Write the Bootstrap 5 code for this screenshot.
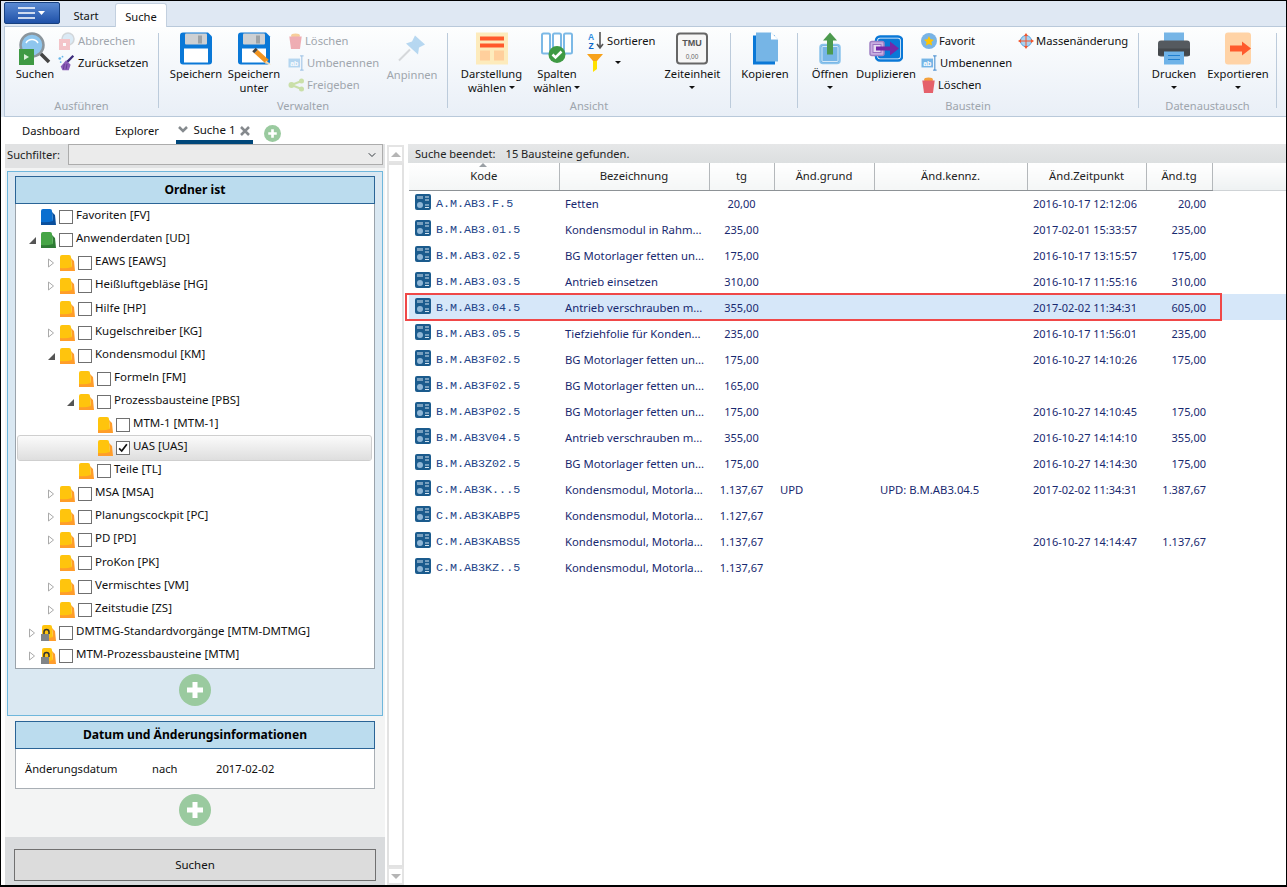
<!DOCTYPE html>
<html lang="de">
<head>
  <meta charset="UTF-8" />
  <title>Suche</title>
  <meta name="viewport" content="width=device-width, initial-scale=1" />
  <link href="https://cdn.jsdelivr.net/npm/bootstrap@5.3.3/dist/css/bootstrap.min.css" rel="stylesheet" />
  <style>
    html, body { margin: 0; height: 887px; overflow: hidden; background: #fff; }
    body { font-family: "Noto Sans", "Liberation Sans", sans-serif; font-size: 11.5px; color: #111; line-height: 1.2; }
    svg { display: block; flex: none; }
    .app-frame { height: 887px; border: 1px solid #000; border-bottom-width: 2px; display: flex; flex-direction: column; overflow: hidden; }

    /* ribbon */
    .top-area { background: #dfe8f3; padding-left: 3px; flex: none; font-size: 11.2px; }
    .tab-strip { height: 25px; align-items: flex-end; }
    .menu-btn { width: 56px; height: 22px; margin-bottom: 2px; border: 1px solid #17407f; border-radius: 2px; background: linear-gradient(#5a8ad2, #1f51a8); }
    .rb-tab { height: 23px; padding: 6px 0 0; width: 52px; text-align: center; }
    .rb-tab-on { background: #fff; border: 1px solid #c3d0df; border-bottom: 0; border-radius: 3px 3px 0 0; margin-left: 3px; margin-bottom: -1px; height: 24px; position: relative; }
    .ribbon { height: 91px; border: 1px solid #b9c9da; border-right: 0; background: linear-gradient(#fdfefe, #e9eff7); }
    .rb-group { display: flex; flex-direction: column; flex: none; }
    .rb-body { display: flex; height: 71px; }
    .rb-title { text-align: center; color: #9ea5ad; height: 16px; line-height: 16px; font-size: 11.1px; }
    .rb-sep { width: 1px; height: 75px; margin-top: 6px; background: #bccbdb; flex: none; }
    .rb-big { display: flex; flex-direction: column; align-items: center; padding-top: 5px; text-align: center; line-height: 13.5px; flex: none; }
    .rb-big svg { margin-bottom: 2px; height: 33px; }
    .rb-small { padding-top: 3px; flex: none; }
    .rb-item { display: flex; align-items: center; height: 22px; white-space: nowrap; gap: 2px; }
    .is-off { color: #a0a6ad; }
    .is-off svg { opacity: .5; }
    .only-caret::after { margin-left: 0; }
    .dropdown-toggle::after { color: #111; }
    .w-g1 { width: 153px; } .w-g2 { width: 288px; } .w-g3 { width: 282px; } .w-g4 { width: 66px; } .w-g5 { width: 340px; } .w-g6 { width: 137px; }
    .pl-g1 { padding-left: 7px; } .pl-g2 { padding-left: 8px; } .pl-g3 { padding-left: 8px; } .pl-g4 { padding-left: 2px; } .pl-g5 { padding-left: 9px; } .pl-g6 { padding-left: 6px; }
    .bw-44 { width: 46px; } .bw-58 { width: 58px; } .bw-70 { width: 71px; } .bw-60 { width: 60px; } .bw-66 { width: 66px; }
    .gap-save { margin-left: 5px; } .gap-pin { margin-left: 7px; } .gap-zeit { margin-left: 4px; } .gap-fav { margin-left: 2px; } .gap-mass { margin-left: 6px; } .gap-exp { margin-left: 2px; }
    .filter-caret { margin-left: 10px; }
    .bw-pin { width: 52px; }
    .bw-pin svg { margin-bottom: 3px; }

    /* doc tabs */
    .doc-tabs { height: 27px; flex: none; padding-left: 21px; font-size: 11.2px; }
    .doc-tab { padding-top: 7px; }
    .doc-tab-2 { margin-left: 35px; }
    .doc-tab-on { margin-left: 17px; width: 77px; height: 27px; border-bottom: 4px solid #00477a; padding-top: 6px; display: flex; align-items: flex-start; justify-content: center; gap: 5px; font-size: 11.5px; }
    .doc-tab-on svg { margin-top: 3px; }
    .add-tab { margin: 8px 0 0 11px; }

    /* left column */
    .main-area { flex: 1; min-height: 0; display: flex; padding-left: 4px; }
    .left-col { width: 380px; flex: none; background: #d9dbdd; display: flex; flex-direction: column; }
    .filter-bar { height: 24px; flex: none; background: #e1e2e3; display: flex; align-items: center; padding: 0 2px; gap: 8px; color: #222; font-size: 11.2px; }
    .filter-select.form-select { height: 21px; min-height: 0; font-size: 11px; padding: 0 20px 0 4px; border: 1px solid #acacac; border-radius: 0; background-color: #ebebeb; background-size: 10px 8px; background-position: right 5px center; margin-bottom: 3px; flex: 1; }
    .filter-label { margin-bottom: 2px; }
    .left-scroll { background: #f3f4f4; height: 669px; flex: none; padding: 3px 2px 0 2px; }
    .blue-box { height: 545px; background: #dae8f2; border: 1px solid #6fb7dc; padding: 4px 7px 0; }
    .sec-head { height: 28px; background: #bbdcee; border: 1px solid #2a6496; text-align: center; font-weight: 700; line-height: 25px; font-size: 12.1px; color: #000; }
    .tree-box { height: 465px; background: #fff; border: 1px solid #9aa3ab; border-top: 0; padding-top: 1.5px; overflow: hidden; }
    .tree-row { height: 23.1px; display: flex; align-items: center; white-space: nowrap; position: relative; }
    .tree-row > span:last-child { margin-bottom: 4px; }
    .lv0 { padding-left: 11px; } .lv1 { padding-left: 30px; } .lv2 { padding-left: 49px; } .lv3 { padding-left: 68px; }
    .tree-arrow { width: 14px; display: flex; justify-content: flex-start; flex: none; }
    .tree-sel { background: linear-gradient(#fbfbfb, #dedede); outline: 1px solid #cfcfcf; border-radius: 2px; margin: 0 3px 0 2px; width: auto; }
    .tree-sel.lv3 { padding-left: 66px; }
    .tree-check.form-check-input { width: 14px; height: 14px; margin: 0 3px 0 3px; border: 1px solid #707070; border-radius: 0; flex: none; background-color: #fff; }
    .tree-check.form-check-input:checked { background-color: #fff; border-color: #707070; background-image: url("data:image/svg+xml,%3Csvg xmlns='http://www.w3.org/2000/svg' viewBox='0 0 14 14'%3E%3Cpath d='M2.5 7.5l3 3 6-8' fill='none' stroke='%23111' stroke-width='2'/%3E%3C/svg%3E"); background-size: 100%; }
    .add-row { display: flex; justify-content: center; padding-top: 5px; }
    .date-box { padding: 5px 8px 0 8px; }
    .date-body { height: 40px; background: #fff; border: 1px solid #a9afb5; border-top: 0; display: flex; align-items: center; padding-left: 9px; font-size: 11.2px; }
    .dt-a { width: 127px; } .dt-b { width: 64px; }
    .left-foot { flex: 1; padding: 12px 8px 0 9px; }
    .search-btn.btn { width: 362px; height: 32px; background: #dcdcdc; border: 1px solid #707070; border-radius: 0; font-size: 11.5px; color: #111; padding: 0; }

    /* scrollbar */
    .v-scroll { width: 17px; flex: none; margin: 1px 4px 0 2px; display: flex; flex-direction: column; background: #fff; }
    .sb-btn { height: 18px; border: 2px solid #e4e4e4; display: flex; align-items: center; justify-content: center; flex: none; }
    .sb-track { flex: 1; border: 2px solid #e2e2e2; }
    .sb-up { width: 0; height: 0; border: 5px solid transparent; border-top: 0; border-bottom-color: #b5b5b5; }
    .sb-down { width: 0; height: 0; border: 5px solid transparent; border-bottom: 0; border-top-color: #b5b5b5; }

    /* result grid */
    .right-col { flex: 1; min-width: 0; display: flex; flex-direction: column; }
    .status-bar { height: 19px; flex: none; background: linear-gradient(#e6e7e8, #dcdfe0); display: flex; align-items: center; padding-left: 7px; gap: 10px; color: #222; font-size: 11.1px; }
    .grid-wrap { position: relative; flex: 1; padding-left: 1px; }
    .result-grid.table { table-layout: fixed; width: 100%; margin: 0; font-size: 11.3px; }
    .result-grid th, .result-grid td { padding: 0; border: 0; background: transparent; white-space: nowrap; overflow: hidden; vertical-align: middle; box-shadow: none; }
    .result-grid th { height: 27px; font-weight: 400; text-align: center; color: #222; background: linear-gradient(#fff, #f4f6f6); border-right: 1px solid #b4b8bb; border-bottom: 1px solid #8d9296; position: relative; }
    .result-grid th.th-rest { border-right: 0; border-bottom-color: #cfd3d6; background: linear-gradient(#fff, #eef1f2); }
    .result-grid td { height: 26px; color: #18296f; padding-top: 1px; }
    .result-grid .row-sel td { background: #d6e7f9; }
    .sort-mark { position: absolute; top: 0; left: 50%; margin-left: -5px; width: 0; height: 0; border: 4px solid transparent; border-top: 0; border-bottom: 4px solid #9aa0a5; }
    .c-kode { width: 150px; } .c-bez { width: 150px; } .c-tg { width: 65px; } .c-grund { width: 100px; } .c-kenn { width: 153px; } .c-zeit { width: 119px; } .c-atg { width: 66px; }
    .cell-kode { display: flex; align-items: center; gap: 5px; padding-left: 6px; font-family: "Liberation Mono", monospace; font-size: 11.7px; color: #234488; }
    .cell-kode svg { margin-top: -3px; }
    .cell-kode span { margin-top: 1px; }
    .result-grid td.td-bez { padding-left: 6px; }
    .result-grid td.td-tg { text-align: center; font-size: 11px; }
    .result-grid td.td-left { padding-left: 6px; }
    .result-grid td.td-num { font-size: 11px; }
    .result-grid td.td-atg { text-align: right; padding-right: 6px; font-size: 11px; }
    .red-mark { position: absolute; left: -3px; top: 130px; width: 817px; height: 28px; border: 2px solid #f04848; }

    /* folder colours */
    .fd-y { --fd-main: #ffc40d; --fd-dark: #ff9d2a; }
    .fd-b { --fd-main: #0a6fd0; --fd-dark: #0a4f9c; }
    .fd-g { --fd-main: #46a546; --fd-dark: #2e7a34; }
  </style>
</head>
<body>
  <svg width="0" height="0" class="position-absolute">
    <defs>
      <symbol id="i-search" viewBox="0 0 32 33"><path d="M21 21l9 9" stroke="#444" stroke-width="3.5"/><circle cx="13" cy="13" r="11.5" fill="#8ec6ee" stroke="#8b959c" stroke-width="2.5"/><path d="M7 11a7 7 0 0 1 12 0" fill="none" stroke="#fff" stroke-width="1.5"/><rect x="0" y="17" width="15" height="16" fill="#3f9a44"/><path d="M5 22l5 3-5 3z" fill="#d9f0d9"/></symbol>
      <symbol id="i-stop" viewBox="0 0 18 18"><circle cx="10" cy="7" r="6" fill="#bcd9ef" stroke="#aab2b8" stroke-width="1.5"/><rect x="1" y="7" width="11" height="11" fill="#ef8f97"/><rect x="5" y="11" width="3" height="3" fill="#fff"/></symbol>
      <symbol id="i-broom" viewBox="0 0 20 18"><path d="M17 1l-7 7" stroke="#3b2a7a" stroke-width="2.5"/><path d="M9 6l5 5-2 6H5l-2-4z" fill="#8b5cb8"/><path d="M7 10l-1 6M10 10l-1 6" stroke="#5f3a8e" stroke-width="1"/><circle cx="2" cy="4" r="1.5" fill="#66b5e8"/><circle cx="5" cy="2" r="1" fill="#66b5e8"/><circle cx="3" cy="8" r="1" fill="#66b5e8"/></symbol>
      <symbol id="i-save" viewBox="0 0 32 32"><path d="M3 0h25l4 4v25a3 3 0 0 1-3 3H3a3 3 0 0 1-3-3V3a3 3 0 0 1 3-3z" fill="#0a78d7"/><rect x="5" y="1" width="22" height="11" rx="1" fill="#cdd0d3"/><rect x="18" y="3" width="4" height="8" fill="#9da2a6"/><rect x="4" y="16" width="24" height="14" fill="#fff"/></symbol>
      <symbol id="i-save-as" viewBox="0 0 33 32"><path d="M3 0h25l4 4v25a3 3 0 0 1-3 3H3a3 3 0 0 1-3-3V3a3 3 0 0 1 3-3z" fill="#0a78d7"/><rect x="5" y="1" width="22" height="11" rx="1" fill="#cdd0d3"/><rect x="18" y="3" width="4" height="8" fill="#9da2a6"/><rect x="4" y="16" width="24" height="14" fill="#fff"/><path d="M18 19l11 10" stroke="#f2941f" stroke-width="5"/><path d="M16 17l2 2" stroke="#444" stroke-width="5"/><path d="M28 28l5 4-6-1z" fill="#f6d7a8"/></symbol>
      <symbol id="i-trash" viewBox="0 0 16 18"><ellipse cx="8" cy="3" rx="5" ry="2.5" fill="#f4a13c"/><path d="M1 4h14l-2 14H3z" fill="#e5616b"/></symbol>
      <symbol id="i-rename" viewBox="0 0 18 18"><rect x="0" y="4" width="13" height="10" fill="#76b5e6"/><text x="6.5" y="12" font-family="Liberation Sans, sans-serif" font-size="8" font-weight="700" fill="#fff" text-anchor="middle">ab</text><path d="M15 1v16M13 1h4M13 17h4" stroke="#2a7bc8" stroke-width="1" fill="none"/></symbol>
      <symbol id="i-share" viewBox="0 0 16 14"><path d="M3 7l10-4M3 7l10 4" stroke="#a5cc5a" stroke-width="2"/><circle cx="3" cy="7" r="3" fill="#a5cc5a"/><circle cx="13" cy="3" r="2.5" fill="#a5cc5a"/><circle cx="13" cy="11" r="2.5" fill="#a5cc5a"/></symbol>
      <symbol id="i-pin" viewBox="0 0 28 28"><path d="M17 1l10 9-6 3-1 7L8 9l6-2z" fill="#76b5e6"/><path d="M12 15L1 26" stroke="#b5b8bb" stroke-width="2"/></symbol>
      <symbol id="i-layout" viewBox="0 0 32 32"><rect width="32" height="32" fill="#fdebbc"/><rect x="4" y="4" width="24" height="4" fill="#ff5a2c"/><rect x="4" y="11" width="24" height="4" fill="#ff5a2c"/><rect x="4" y="18" width="10" height="10" fill="#ffcf9c"/><rect x="18" y="18" width="10" height="10" fill="#ffcf9c"/></symbol>
      <symbol id="i-columns" viewBox="0 0 32 32"><rect x="1" y="1" width="8" height="20" rx="1.5" fill="#fff" stroke="#7cb9e6" stroke-width="2"/><rect x="12" y="1" width="8" height="20" rx="1.5" fill="#fff" stroke="#7cb9e6" stroke-width="2"/><rect x="23" y="1" width="8" height="20" rx="1.5" fill="#fff" stroke="#7cb9e6" stroke-width="2"/><circle cx="16" cy="22" r="8.5" fill="#3f9a44"/><path d="M11.5 22l3 3 6-6" fill="none" stroke="#fff" stroke-width="2.5"/></symbol>
      <symbol id="i-sort" viewBox="0 0 18 18"><text x="4" y="8" font-family="Liberation Sans, sans-serif" font-size="8.5" font-weight="700" fill="#2f8ee0" text-anchor="middle">A</text><text x="4" y="17" font-family="Liberation Sans, sans-serif" font-size="8.5" font-weight="700" fill="#0a66c8" text-anchor="middle">Z</text><path d="M13 0v15M10 12l3 4 3-4" fill="none" stroke="#555" stroke-width="1.6"/></symbol>
      <symbol id="i-funnel" viewBox="0 0 16 18"><path d="M0 0h16l-6 7H6z" fill="#f7a21b"/><path d="M6 7h4v8l-4 3z" fill="#ffe000"/></symbol>
      <symbol id="i-tmu" viewBox="0 0 32 32"><rect x="1" y="1" width="30" height="30" rx="3" fill="#f6f6f6" stroke="#666" stroke-width="2"/><text x="16" y="13" font-family="Liberation Sans, sans-serif" font-size="9" font-weight="700" fill="#555" text-anchor="middle">TMU</text><text x="16" y="26" font-family="Liberation Sans, sans-serif" font-size="6.5" fill="#666" text-anchor="middle">0,00</text></symbol>
      <symbol id="i-copy" viewBox="0 0 25 32"><rect x="0" y="3" width="22" height="29" fill="#0a78d7"/><path d="M3 0h15l7 7v22H3z" fill="#76b5e6"/><path d="M18 0l7 7h-7z" fill="#fff"/></symbol>
      <symbol id="i-open" viewBox="0 0 22 32"><rect x="1" y="12" width="20" height="19" rx="3" fill="#76b5e6" stroke="#8cc4ec" stroke-width="1.5"/><rect x="3" y="14" width="16" height="15" rx="1" fill="#76b5e6" stroke="#fff" stroke-width=".7"/><path d="M11 0l7 8h-4v14H8V8H4z" fill="#4c9a4e"/></symbol>
      <symbol id="i-dup" viewBox="0 0 34 26"><rect x="7" y="1" width="26" height="24" rx="4" fill="#fff" stroke="#0a78d7" stroke-width="2.5"/><rect x="9" y="3" width="22" height="20" rx="2" fill="#0a78d7"/><rect x="1" y="6" width="14" height="14" rx="2" fill="#c9aee0" stroke="#a080c4" stroke-width="1.5"/><rect x="4" y="9" width="8" height="8" fill="#e6dcf0" stroke="#9a72c0"/><path d="M7 11h14V6l9 7-9 7v-5H7z" fill="#7428a8"/></symbol>
      <symbol id="i-fav" viewBox="0 0 16 16"><circle cx="8" cy="8" r="8" fill="#78b4e6"/><path d="M8 3l1.5 3.3 3.5.4-2.6 2.4.7 3.5L8 10.900 4.900 12.600l.7-3.500L3 6.700l3.500-.4z" fill="#ffc400"/></symbol>
      <symbol id="i-mass" viewBox="0 0 16 16"><circle cx="8" cy="8" r="5.500" fill="#a9d2f0" stroke="#5aa5e0"/><path d="M8 0l2 3H6zM8 16l2-3H6zM0 8l3-2v4zM16 8l-3-2v4z" fill="#f2552c"/><path d="M8 2v12M2 8h12" stroke="#f2552c" stroke-width="1"/></symbol>
      <symbol id="i-print" viewBox="0 0 32 32"><rect x="6" y="0" width="20" height="10" fill="#76b5e6"/><rect x="0" y="8" width="32" height="16" rx="3" fill="#555a5f"/><rect x="0" y="16" width="32" height="7" fill="#44484c"/><rect x="6" y="19" width="20" height="13" fill="#6fb3e8"/><path d="M10 23h12M10 27h12" stroke="#1f7fd0"/></symbol>
      <symbol id="i-export" viewBox="0 0 26 32"><rect width="26" height="32" rx="3" fill="#ffd3a6"/><path d="M5 13h12V9l9 7-9 7v-4H5z" fill="#ff5a2c"/></symbol>
      <symbol id="i-folder" viewBox="0 0 15 16"><path d="M0 12h12l-1-9 3 3 1 10H0z" style="fill:var(--fd-dark)"/><path d="M0 2q0-2 2-2h7q2 0 2 2l1 10q-6 2-12 1z" style="fill:var(--fd-main)"/></symbol>
      <symbol id="i-folder-lock" viewBox="0 0 15 16"><path d="M0 12h12l-1-9 3 3 1 10H0z" fill="#ff9d2a"/><path d="M1 2q0-2 2-2h6q2 0 2 2l1 10q-6 2-11 1z" fill="#ffc40d"/><path d="M3 9V7a2.500 2.500 0 0 1 5 0v2" fill="none" stroke="#333" stroke-width="1.500"/><rect x="0" y="9" width="8" height="7" fill="#808487"/></symbol>
      <symbol id="i-row" viewBox="0 0 16 16"><rect width="16" height="16" rx="2" fill="#1b5b8d"/><circle cx="5" cy="11" r="3" fill="#8fb6d6"/><path d="M3 2v3M5 2v3M10 3h4M10 6h4M10 11h4M10 13.500h4M7 2v3" stroke="#d5e4f0" stroke-width="1"/></symbol>
      <symbol id="i-plus" viewBox="0 0 32 32"><circle cx="16" cy="16" r="16" fill="#9aca9f"/><path d="M16 8v16M8 16h16" stroke="#fff" stroke-width="5"/></symbol>
      <symbol id="t-open" viewBox="0 0 10 10"><path d="M9 2v7H2z" fill="#555"/></symbol>
      <symbol id="t-closed" viewBox="0 0 10 10"><path d="M2.500 1l5 4-5 4z" fill="#fff" stroke="#aaa"/></symbol>
      <symbol id="i-chev" viewBox="0 0 10 8"><path d="M1 1l4 4 4-4" fill="none" stroke="#858a8e" stroke-width="2.500"/></symbol>
      <symbol id="i-x" viewBox="0 0 10 10"><path d="M1 1l8 8M9 1l-8 8" stroke="#85898d" stroke-width="2.500"/></symbol>
    </defs>
  </svg>

  <div class="app-frame">
    <!-- Ribbon -->
    <div class="top-area">
      <div class="d-flex tab-strip">
        <div class="menu-btn d-flex align-items-center justify-content-center gap-1">
          <svg width="30" height="14" viewBox="0 0 30 14"><path d="M1 2h17M1 7h17M1 12h17" stroke="#fff" stroke-width="1.600"/><path d="M21 5h7l-3.500 4z" fill="#fff"/></svg>
        </div>
        <div class="rb-tab">Start</div>
        <div class="rb-tab rb-tab-on">Suche</div>
      </div>
      <div class="ribbon d-flex">
        <div class="rb-group w-g1">
          <div class="rb-body pl-g1">
            <div class="rb-big bw-44"><svg width="32" height="33"><use href="#i-search"/></svg>Suchen</div>
            <div class="rb-small">
              <div class="rb-item is-off"><svg width="18" height="18"><use href="#i-stop"/></svg>Abbrechen</div>
              <div class="rb-item"><svg width="18" height="18"><use href="#i-broom"/></svg>Zurücksetzen</div>
            </div>
          </div>
          <div class="rb-title">Ausführen</div>
        </div>
        <div class="rb-sep"></div>
        <div class="rb-group w-g2">
          <div class="rb-body pl-g2">
            <div class="rb-big bw-58"><svg width="32" height="33"><use href="#i-save"/></svg>Speichern</div>
            <div class="rb-big bw-58"><svg width="33" height="33"><use href="#i-save-as"/></svg>Speichern<br />unter</div>
            <div class="rb-small gap-save">
              <div class="rb-item is-off"><svg width="15" height="16"><use href="#i-trash"/></svg>Löschen</div>
              <div class="rb-item is-off"><svg width="17" height="16"><use href="#i-rename"/></svg>Umbenennen</div>
              <div class="rb-item is-off"><svg width="17" height="14"><use href="#i-share"/></svg>Freigeben</div>
            </div>
            <div class="rb-big bw-pin gap-pin is-off"><svg width="28" height="33"><use href="#i-pin"/></svg>Anpinnen</div>
          </div>
          <div class="rb-title">Verwalten</div>
        </div>
        <div class="rb-sep"></div>
        <div class="rb-group w-g3">
          <div class="rb-body pl-g3">
            <div class="rb-big bw-70"><svg width="32" height="33"><use href="#i-layout"/></svg>Darstellung<span class="dropdown-toggle">wählen</span></div>
            <div class="rb-big bw-60"><svg width="32" height="33"><use href="#i-columns"/></svg>Spalten<span class="dropdown-toggle">wählen</span></div>
            <div class="rb-small">
              <div class="rb-item"><svg width="18" height="18"><use href="#i-sort"/></svg>Sortieren</div>
              <div class="rb-item"><svg width="16" height="18"><use href="#i-funnel"/></svg><span class="dropdown-toggle only-caret filter-caret"></span></div>
            </div>
            <div class="rb-big bw-66 gap-zeit"><svg width="32" height="33"><use href="#i-tmu"/></svg>Zeiteinheit<span class="dropdown-toggle only-caret"></span></div>
          </div>
          <div class="rb-title">Ansicht</div>
        </div>
        <div class="rb-sep"></div>
        <div class="rb-group w-g4">
          <div class="rb-body pl-g4">
            <div class="rb-big w-100"><svg width="25" height="33"><use href="#i-copy"/></svg>Kopieren</div>
          </div>
          <div class="rb-title">&nbsp;</div>
        </div>
        <div class="rb-sep"></div>
        <div class="rb-group w-g5">
          <div class="rb-body pl-g5">
            <div class="rb-big bw-44"><svg width="22" height="33"><use href="#i-open"/></svg>Öffnen<span class="dropdown-toggle only-caret"></span></div>
            <div class="rb-big bw-66"><svg width="34" height="33"><use href="#i-dup"/></svg>Duplizieren</div>
            <div class="rb-small gap-fav">
              <div class="rb-item"><svg width="16" height="16"><use href="#i-fav"/></svg>Favorit</div>
              <div class="rb-item"><svg width="17" height="16"><use href="#i-rename"/></svg>Umbenennen</div>
              <div class="rb-item"><svg width="15" height="16"><use href="#i-trash"/></svg>Löschen</div>
            </div>
            <div class="rb-small gap-mass">
              <div class="rb-item"><svg width="16" height="16"><use href="#i-mass"/></svg>Massenänderung</div>
            </div>
          </div>
          <div class="rb-title">Baustein</div>
        </div>
        <div class="rb-sep"></div>
        <div class="rb-group w-g6">
          <div class="rb-body pl-g6">
            <div class="rb-big bw-58"><svg width="32" height="33"><use href="#i-print"/></svg>Drucken<span class="dropdown-toggle only-caret"></span></div>
            <div class="rb-big bw-66 gap-exp"><svg width="26" height="33"><use href="#i-export"/></svg>Exportieren<span class="dropdown-toggle only-caret"></span></div>
          </div>
          <div class="rb-title">Datenaustausch</div>
        </div>
        <div class="rb-sep"></div>
      </div>
    </div>

    <!-- Dokument-Tabs -->
    <div class="doc-tabs d-flex">
      <div class="doc-tab">Dashboard</div>
      <div class="doc-tab doc-tab-2">Explorer</div>
      <div class="doc-tab-on"><svg width="10" height="8"><use href="#i-chev"/></svg>Suche 1<svg width="10" height="10"><use href="#i-x"/></svg></div>
      <svg class="add-tab" width="17" height="17"><use href="#i-plus"/></svg>
    </div>

    <div class="main-area">
      <!-- Suchfilter und Kriterien -->
      <div class="left-col">
        <div class="filter-bar">
          <span class="filter-label">Suchfilter:</span>
          <select class="form-select filter-select"><option></option></select>
        </div>
        <div class="left-scroll">
          <div class="blue-box">
            <div class="sec-head">Ordner ist</div>
            <div class="tree-box" id="tree"></div>
            <div class="add-row"><svg width="32" height="32"><use href="#i-plus"/></svg></div>
          </div>
          <div class="date-box">
            <div class="sec-head">Datum und Änderungsinformationen</div>
            <div class="date-body">
              <span class="dt-a">Änderungsdatum</span><span class="dt-b">nach</span><span>2017-02-02</span>
            </div>
            <div class="add-row"><svg width="32" height="32"><use href="#i-plus"/></svg></div>
          </div>
        </div>
        <div class="left-foot">
          <button type="button" class="btn search-btn">Suchen</button>
        </div>
      </div>

      <div class="v-scroll">
        <div class="sb-btn"><span class="sb-up"></span></div>
        <div class="sb-track"></div>
        <div class="sb-btn"><span class="sb-down"></span></div>
      </div>

      <!-- Ergebnisliste -->
      <div class="right-col">
        <div class="status-bar"><span>Suche beendet:</span><span>15 Bausteine gefunden.</span></div>
        <div class="grid-wrap">
          <table class="table result-grid">
            <colgroup>
              <col class="c-kode" /><col class="c-bez" /><col class="c-tg" /><col class="c-grund" /><col class="c-kenn" /><col class="c-zeit" /><col class="c-atg" /><col />
            </colgroup>
            <thead>
              <tr>
                <th><span class="sort-mark"></span>Kode</th><th>Bezeichnung</th><th>tg</th><th>Änd.grund</th><th>Änd.kennz.</th><th>Änd.Zeitpunkt</th><th>Änd.tg</th><th class="th-rest"></th>
              </tr>
            </thead>
            <tbody id="rows"></tbody>
          </table>
          <div class="red-mark"></div>
        </div>
      </div>
    </div>
  </div>

  <script>
    // level, arrow (o/c/-), icon colour, label
    const tree = [
      [0, "-", "b", "Favoriten [FV]"],
      [0, "o", "g", "Anwenderdaten [UD]"],
      [1, "c", "y", "EAWS [EAWS]"],
      [1, "c", "y", "Heißluftgebläse [HG]"],
      [1, "-", "y", "Hilfe [HP]"],
      [1, "c", "y", "Kugelschreiber [KG]"],
      [1, "o", "y", "Kondensmodul [KM]"],
      [2, "-", "y", "Formeln [FM]"],
      [2, "o", "y", "Prozessbausteine [PBS]"],
      [3, "-", "y", "MTM-1 [MTM-1]"],
      [3, "-", "y", "UAS [UAS]", true],
      [2, "-", "y", "Teile [TL]"],
      [1, "c", "y", "MSA [MSA]"],
      [1, "c", "y", "Planungscockpit [PC]"],
      [1, "c", "y", "PD [PD]"],
      [1, "-", "y", "ProKon [PK]"],
      [1, "c", "y", "Vermischtes [VM]"],
      [1, "c", "y", "Zeitstudie [ZS]"],
      [0, "c", "l", "DMTMG-Standardvorgänge [MTM-DMTMG]"],
      [0, "c", "l", "MTM-Prozessbausteine [MTM]"]
    ];
    document.getElementById("tree").innerHTML = tree.map(([lv, arrow, col, label, on]) => {
      const arr = arrow === "-" ? "" : `<svg width="10" height="10"><use href="#${arrow === "o" ? "t-open" : "t-closed"}"/></svg>`;
      const icon = col === "l" ? "i-folder-lock" : "i-folder";
      return `<div class="tree-row lv${lv} ${on ? "tree-sel" : ""}">
        <span class="tree-arrow">${arr}</span>
        <svg class="fd-${col}" width="15" height="16"><use href="#${icon}"/></svg>
        <input type="checkbox" class="form-check-input tree-check" ${on ? "checked" : ""} />
        <span>${label}</span>
      </div>`;
    }).join("");

    const rows = [
      ["A.M.AB3.F.5", "Fetten", "20,00", "", "", "2016-10-17 12:12:06", "20,00"],
      ["B.M.AB3.01.5", "Kondensmodul in Rahm...", "235,00", "", "", "2017-02-01 15:33:57", "235,00"],
      ["B.M.AB3.02.5", "BG Motorlager fetten un...", "175,00", "", "", "2016-10-17 13:15:57", "175,00"],
      ["B.M.AB3.03.5", "Antrieb einsetzen", "310,00", "", "", "2016-10-17 11:55:16", "310,00"],
      ["B.M.AB3.04.5", "Antrieb verschrauben m...", "355,00", "", "", "2017-02-02 11:34:31", "605,00"],
      ["B.M.AB3.05.5", "Tiefziehfolie für Konden...", "235,00", "", "", "2016-10-17 11:56:01", "235,00"],
      ["B.M.AB3F02.5", "BG Motorlager fetten un...", "175,00", "", "", "2016-10-27 14:10:26", "175,00"],
      ["B.M.AB3F02.5", "BG Motorlager fetten un...", "165,00", "", "", "", ""],
      ["B.M.AB3P02.5", "BG Motorlager fetten un...", "175,00", "", "", "2016-10-27 14:10:45", "175,00"],
      ["B.M.AB3V04.5", "Antrieb verschrauben m...", "355,00", "", "", "2016-10-27 14:14:10", "355,00"],
      ["B.M.AB3Z02.5", "BG Motorlager fetten un...", "175,00", "", "", "2016-10-27 14:14:30", "175,00"],
      ["C.M.AB3K...5", "Kondensmodul, Motorla...", "1.137,67", "UPD", "UPD: B.M.AB3.04.5", "2017-02-02 11:34:31", "1.387,67"],
      ["C.M.AB3KABP5", "Kondensmodul, Motorla...", "1.127,67", "", "", "", ""],
      ["C.M.AB3KABS5", "Kondensmodul, Motorla...", "1.137,67", "", "", "2016-10-27 14:14:47", "1.137,67"],
      ["C.M.AB3KZ..5", "Kondensmodul, Motorla...", "1.137,67", "", "", "", ""]
    ];
    document.getElementById("rows").innerHTML = rows.map((r, i) => `
      <tr class="${i === 4 ? "row-sel" : ""}">
        <td><div class="cell-kode"><svg width="16" height="16"><use href="#i-row"/></svg><span>${r[0]}</span></div></td>
        <td class="td-bez">${r[1]}</td>
        <td class="td-tg">${r[2]}</td>
        <td class="td-left">${r[3]}</td>
        <td class="td-left">${r[4]}</td>
        <td class="td-left td-num">${r[5]}</td>
        <td class="td-atg">${r[6]}</td>
        <td></td>
      </tr>`).join("");
  </script>
  <script src="https://cdn.jsdelivr.net/npm/bootstrap@5.3.3/dist/js/bootstrap.bundle.min.js"></script>
</body>
</html>
